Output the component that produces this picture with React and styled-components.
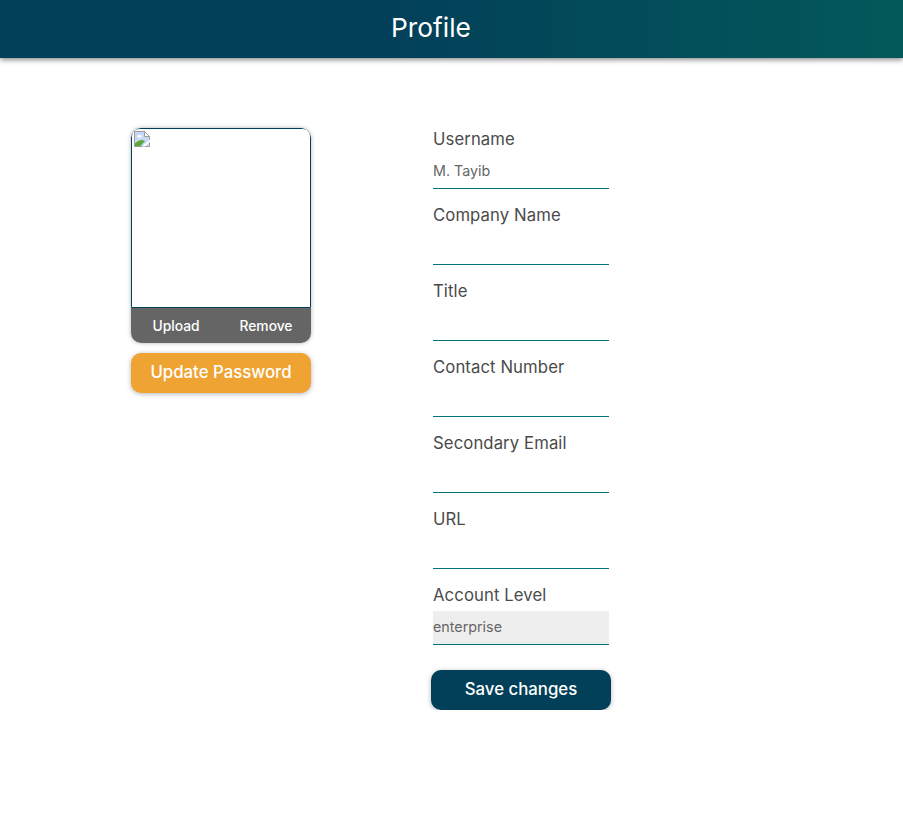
import React from 'react';
import styled, { createGlobalStyle } from 'styled-components';

const GlobalStyle = createGlobalStyle`
  html, body {
    margin: 0;
    padding: 0;
    background: #ffffff;
    font-family: 'Inter', 'Liberation Sans', sans-serif;
  }
`;

const Header = styled.header`
  height: 58px;
  display: flex;
  align-items: center;
  justify-content: center;
  padding: 0 41px 2px 0;
  box-sizing: border-box;
  background: linear-gradient(90deg, #023f59 0%, #023f59 40%, #03595a 100%);
  box-shadow: 0 2px 5px rgba(0, 0, 0, 0.45);
`;

const Title = styled.h1`
  margin: 0;
  color: #ffffff;
  font-size: 26.3px;
  font-weight: 400;
  line-height: 1;
`;

const Main = styled.main`
  display: flex;
  align-items: flex-start;
  gap: 122px;
  padding: 70px 0 0 131px;
`;

const LeftColumn = styled.div`
  width: 180px;
  display: flex;
  flex-direction: column;
  gap: 10px;
`;

const PhotoCard = styled.div`
  border-radius: 10px;
  overflow: hidden;
  box-shadow: 0 0 4px rgba(0, 0, 0, 0.3);
`;

const Photo = styled.div`
  height: 180px;
  box-sizing: border-box;
  padding: 2px;
  background: #ffffff;
  border: 1px solid #023f59;
  border-radius: 8px 8px 0 0;
`;

const BrokenImage = styled.svg`
  display: block;
  width: 16px;
  height: 16px;
`;

const PhotoActions = styled.div`
  height: 35px;
  display: flex;
  align-items: center;
  background: #656565;
`;

const PhotoAction = styled.button`
  flex: 1;
  border: none;
  padding: 0;
  background: none;
  color: #ffffff;
  font-family: inherit;
  font-size: 13.8px;
  font-weight: 500;
  cursor: pointer;
`;

const Button = styled.button`
  height: 40px;
  width: 180px;
  border: none;
  padding: 0 0 2px;
  border-radius: 10px;
  background: ${(p) => p.$bg};
  color: #ffffff;
  font-family: inherit;
  font-size: 16.8px;
  font-weight: 500;
  box-shadow: 0 1px 5px rgba(0, 0, 0, 0.3);
  cursor: pointer;
`;

const Form = styled.form`
  width: 176px;
  display: flex;
  flex-direction: column;
`;

const Field = styled.label`
  height: 76px;
  display: flex;
  flex-direction: column;
  color: #4a4a4a;
  font-size: 16.7px;
  letter-spacing: 0.1px;
  line-height: 22px;
`;

const Input = styled.input`
  box-sizing: border-box;
  width: 100%;
  height: 34px;
  margin-top: 5px;
  padding: 0 0 2px;
  border: none;
  border-bottom: 1px solid #007478;
  border-radius: 0;
  outline: none;
  background: ${(p) => (p.disabled ? '#eeeeee' : 'transparent')};
  color: #666666;
  font-family: inherit;
  font-size: 14.3px;
`;

const SaveRow = styled.div`
  margin: 10px 0 0 -2px;
`;

const fields = [
  { label: 'Username', value: 'M. Tayib' },
  { label: 'Company Name', value: '' },
  { label: 'Title', value: '' },
  { label: 'Contact Number', value: '' },
  { label: 'Secondary Email', value: '' },
  { label: 'URL', value: '' },
  { label: 'Account Level', value: 'enterprise', disabled: true },
];

const App = () => {
  return (
    <>
      <GlobalStyle />
      <Header>
        <Title>Profile</Title>
      </Header>
      <Main>
        <LeftColumn>
          <PhotoCard>
            <Photo>
              <BrokenImage viewBox="0 0 16 16">
                <path d="M0.5 0.5H10.5L15.5 5.5V15.5H0.5Z" fill="#c9d8f5" stroke="#9c9c9c" />
                <path d="M10.5 0.5V5.5H15.5Z" fill="#ffffff" stroke="#9c9c9c" />
                <path d="M3 5.5C4 3.5 7 3.5 8 5.5C7 7 4 7 3 5.5Z" fill="#ffffff" />
                <path d="M1 15V12.5C4 9 8 8 11 10L6.5 15Z" fill="#5aa83a" />
                <path d="M8 15.5L16 8.5V11L11 15.5Z" fill="#ffffff" />
              </BrokenImage>
            </Photo>
            <PhotoActions>
              <PhotoAction type="button">Upload</PhotoAction>
              <PhotoAction type="button">Remove</PhotoAction>
            </PhotoActions>
          </PhotoCard>
          <Button type="button" $bg="#efa333">Update Password</Button>
        </LeftColumn>
        <Form>
          {fields.map((f) => (
            <Field key={f.label}>
              {f.label}
              <Input defaultValue={f.value} disabled={f.disabled} />
            </Field>
          ))}
          <SaveRow>
            <Button type="button" $bg="#023f59">Save changes</Button>
          </SaveRow>
        </Form>
      </Main>
    </>
  );
};

export default App;
